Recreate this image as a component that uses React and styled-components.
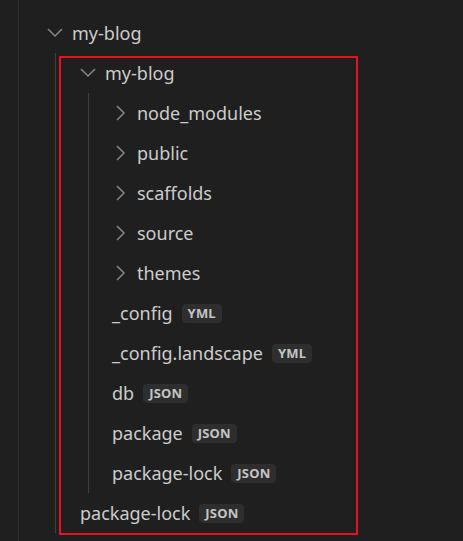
import React from 'react';
import styled, { createGlobalStyle } from 'styled-components';

const GlobalStyle = createGlobalStyle`
  html, body {
    margin: 0;
    padding: 0;
    background: #1f1f1f;
  }
  body {
    font-family: "Noto Sans", "Open Sans", sans-serif;
    color: #cccccc;
  }
`;

const Explorer = styled.div`
  min-height: 100vh;
  box-sizing: border-box;
  padding-top: 13px;
  margin-left: 18px;
  border-left: 1px solid #2e2e2e;
  overflow: hidden;
`;

const Group = styled.div`
  position: relative;
  margin-left: ${({ $indent }) => $indent}px;
  border-left: 1px solid #3f3f3f;
`;

const Highlight = styled.div`
  position: absolute;
  top: 3px;
  left: 3px;
  width: 299px;
  height: 479px;
  box-sizing: border-box;
  border: 2px solid #e81123;
  pointer-events: none;
`;

const Row = styled.div`
  height: 40px;
  display: flex;
  align-items: center;
  padding-left: ${({ $pad }) => $pad}px;
  font-size: 18px;
  white-space: nowrap;
`;

const Twistie = styled.span`
  width: 20px;
  height: 20px;
  display: flex;
  align-items: center;
  justify-content: center;
  margin-right: 7px;
  color: #868686;
`;

const Label = styled.span`
  line-height: 40px;
`;

const Badge = styled.span`
  margin-left: 9px;
  height: 19px;
  padding: 0 6px;
  border-radius: 4px;
  background: #2e2e2e;
  color: #c4c4c4;
  font-size: 13px;
  font-weight: 700;
  letter-spacing: 0.2px;
  display: inline-flex;
  align-items: center;
`;

const Chevron = ({ open }) => (
  <svg width="20" height="20" viewBox="0 0 20 20" fill="none" stroke="currentColor" strokeWidth="1.5">
    {open ? <polyline points="3,6 10,13 17,6" /> : <polyline points="7,3 14,10 7,17" />}
  </svg>
);

const Folder = ({ name, open, pad }) => (
  <Row $pad={pad}>
    <Twistie><Chevron open={open} /></Twistie>
    <Label>{name}</Label>
  </Row>
);

const File = ({ name, ext, pad }) => (
  <Row $pad={pad}>
    <Label>{name}</Label>
    <Badge>{ext}</Badge>
  </Row>
);

const innerFolders = ['node_modules', 'public', 'scaffolds', 'source', 'themes'];
const innerFiles = [
  ['_config', 'YML'],
  ['_config.landscape', 'YML'],
  ['db', 'JSON'],
  ['package', 'JSON'],
  ['package-lock', 'JSON'],
];

export default function App() {
  return (
    <>
      <GlobalStyle />
      <Explorer>
        <Folder name="my-blog" open pad={26} />
        <Group $indent={36}>
          <Highlight />
          <Folder name="my-blog" open pad={22} />
          <Group $indent={32}>
            {innerFolders.map((f) => (
              <Folder key={f} name={f} pad={21} />
            ))}
            {innerFiles.map(([n, e]) => (
              <File key={n} name={n} ext={e} pad={23} />
            ))}
          </Group>
          <File name="package-lock" ext="JSON" pad={24} />
        </Group>
      </Explorer>
    </>
  );
}
